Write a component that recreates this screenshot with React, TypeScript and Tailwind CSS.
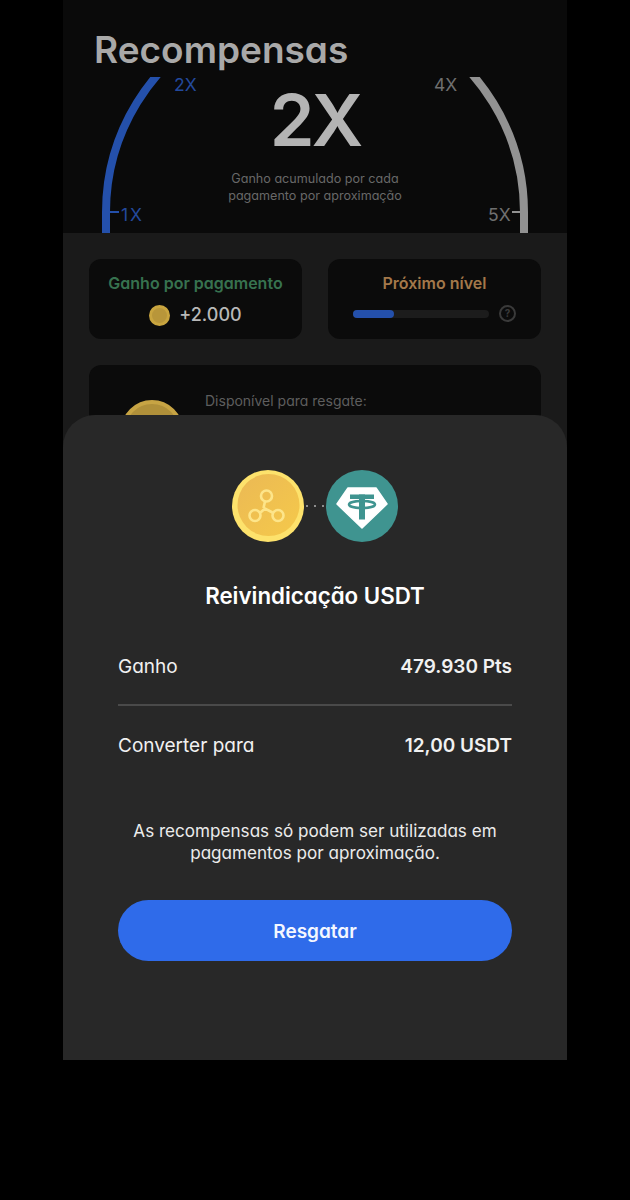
const inter = "font-['Inter','Liberation_Sans',sans-serif] [font-feature-settings:'cv11']";

function Gauge() {
  return (
    <svg className="absolute left-0 top-[77px]" width="504" height="156" viewBox="0 0 504 156" fill="none">
      {/* circle centre sits at 252,135 in this box */}
      <path d="M43 156V135A209 209 0 0 1 157 -51" stroke="#2450ab" strokeWidth="8" />
      <path d="M46 135H56" stroke="#2450ab" strokeWidth="2" />
      <path d="M347 -51A209 209 0 0 1 461 135V156" stroke="#929292" strokeWidth="8" />
      <path d="M458 135H449" stroke="#929292" strokeWidth="2" />
    </svg>
  );
}

function CoinGlyph() {
  return (
    <svg width="72" height="72" viewBox="0 0 72 72">
      <defs>
        <linearGradient id="coinFace" x1="0" y1="0" x2="1" y2="1">
          <stop offset="0" stopColor="#ebb955" />
          <stop offset="1" stopColor="#f5c94a" />
        </linearGradient>
      </defs>
      <circle cx="36" cy="36" r="36" fill="#fde26c" />
      <path d="M2 47A36 36 0 0 0 70 47 36 36 0 0 1 2 47Z" fill="#e8b62f" />
      <circle cx="36.5" cy="35" r="31" fill="url(#coinFace)" />
      <g stroke="#fde58a" strokeWidth="2.6" fill="none">
        <circle cx="34.5" cy="26" r="5.5" />
        <circle cx="23" cy="45.5" r="5.5" />
        <circle cx="46" cy="45.5" r="5.5" />
        <path d="M33 31.5 31.5 38 M28.5 42.5 33 38.5 40.5 42.5" />
      </g>
    </svg>
  );
}

function TetherGlyph() {
  return (
    <svg width="72" height="72" viewBox="0 0 72 72">
      <circle cx="36" cy="36" r="36" fill="#3f9490" />
      <path d="M22 18H50L61 34 36 58 11 34Z" fill="#fff" strokeLinejoin="round" stroke="#fff" strokeWidth="1.5" />
      <g fill="#3f9490">
        <rect x="24" y="24.5" width="24" height="4.5" />
        <rect x="33" y="24.5" width="6" height="25" />
      </g>
      <ellipse cx="36" cy="34.5" rx="13" ry="3.5" fill="none" stroke="#3f9490" strokeWidth="2.5" />
    </svg>
  );
}

function StatCard({ title, color, children }: { title: string; color: string; children: React.ReactNode }) {
  return (
    <div className="flex h-20 w-[213px] flex-col items-center rounded-xl bg-[#0b0b0b] pt-[14px]">
      <p className={`text-[16px] font-semibold leading-5 ${color}`}>{title}</p>
      {children}
    </div>
  );
}

function Row({ label, value }: { label: string; value: string }) {
  return (
    <div className="flex items-center justify-between text-[19px] leading-6 text-[#f1f1f1]">
      <span>{label}</span>
      <span className="font-semibold">{value}</span>
    </div>
  );
}

export default function App() {
  return (
    <div className={`h-[1200px] w-[630px] bg-black ${inter}`}>
      <div className="relative mx-auto h-[1060px] w-[504px] overflow-hidden bg-[#1a1a1a]">
        <header className="relative flex h-[233px] flex-col items-center overflow-hidden bg-[#0a0a0a]">
          <Gauge />
          <h1 className="absolute left-[31px] top-[28px] text-[37px] font-semibold leading-[44px] text-[#a9a9a9]">Recompensas</h1>
          <span className="absolute left-[111px] top-[75px] text-[17.5px] leading-5 text-[#23499c]">2X</span>
          <span className="absolute left-[371px] top-[75px] text-[17.5px] leading-5 text-[#6f6f6f]">4X</span>
          <span className="absolute left-[58px] top-[205px] text-[17.5px] leading-5 tracking-[2px] text-[#23499c]">1X</span>
          <span className="absolute left-[425px] top-[205px] text-[17.5px] leading-5 text-[#6f6f6f]">5X</span>
          <p className="mt-[80px] text-[72px] font-semibold leading-[80px] tracking-[-3px] text-[#b4b4b4]">2X</p>
          <p className="mt-[10px] text-center text-[12.6px] leading-[17px] text-[#686868]">
            Ganho acumulado por cada
            <br />
            pagamento por aproximação
          </p>
        </header>

        <section className="flex flex-col gap-[26px] px-[26px] pt-[26px]">
          <div className="flex justify-between">
            <StatCard title="Ganho por pagamento" color="text-[#37724f]">
              <div className="mt-[10px] flex items-center gap-[9px]">
                <span className="size-[21px] rounded-full border-[3px] border-[#c9a53f] bg-[#b8963a]" />
                <span className="text-[18px] font-medium leading-6 text-[#b8b8b8]">+2.000</span>
              </div>
            </StatCard>
            <StatCard title="Próximo nível" color="text-[#a3784a]">
              <div className="mt-[12px] flex items-center gap-[10px]">
                <div className="h-[8px] w-[136px] rounded-full bg-[#1c1c1c]">
                  <div className="h-full w-[41px] rounded-full bg-[#2450ab]" />
                </div>
                <span className="flex size-[17px] items-center justify-center rounded-full border-2 border-[#3a3a3a] text-[10px] font-bold text-[#3a3a3a]">?</span>
              </div>
            </StatCard>
          </div>
          <div className="flex h-[100px] gap-[22px] rounded-xl bg-[#0b0b0b] pl-[32px] pt-[26px]">
            <span className="mt-[9px] size-[62px] shrink-0 rounded-full border-[4px] border-[#c7a444] bg-[#b0903a]" />
            <p className="text-[14px] leading-5 text-[#5e5e5e]">Disponível para resgate:</p>
          </div>
        </section>

        <section className="absolute inset-x-0 bottom-0 top-[415px] rounded-t-[32px] bg-[#282828] px-[55px] pt-[55px]">
          <div className="flex items-center justify-center">
            <CoinGlyph />
            <div className="flex w-[22px] justify-between px-[2px]">
              <span className="size-[2px] bg-[#8d8d8d]" />
              <span className="size-[2px] bg-[#8d8d8d]" />
              <span className="size-[2px] bg-[#8d8d8d]" />
            </div>
            <TetherGlyph />
          </div>
          <h2 className="mt-[40px] text-center text-[22.3px] font-semibold leading-7 text-white">Reivindicação USDT</h2>
          <div className="mt-[45px]">
            <Row label="Ganho" value="479.930 Pts" />
          </div>
          <div className="mt-[25px] h-[2px] bg-[#4a4a4a]" />
          <div className="mt-[28px]">
            <Row label="Converter para" value="12,00 USDT" />
          </div>
          <p className="mt-[62px] text-center text-[17.1px] leading-[22px] text-[#ececec]">
            As recompensas só podem ser utilizadas em
            <br />
            pagamentos por aproximação.
          </p>
          <button className="mt-[36px] h-[61px] w-full rounded-full bg-[#2f6bea] pt-[3px] text-[19px] font-semibold text-[#f4f7ff]">Resgatar</button>
        </section>
      </div>
    </div>
  );
}
